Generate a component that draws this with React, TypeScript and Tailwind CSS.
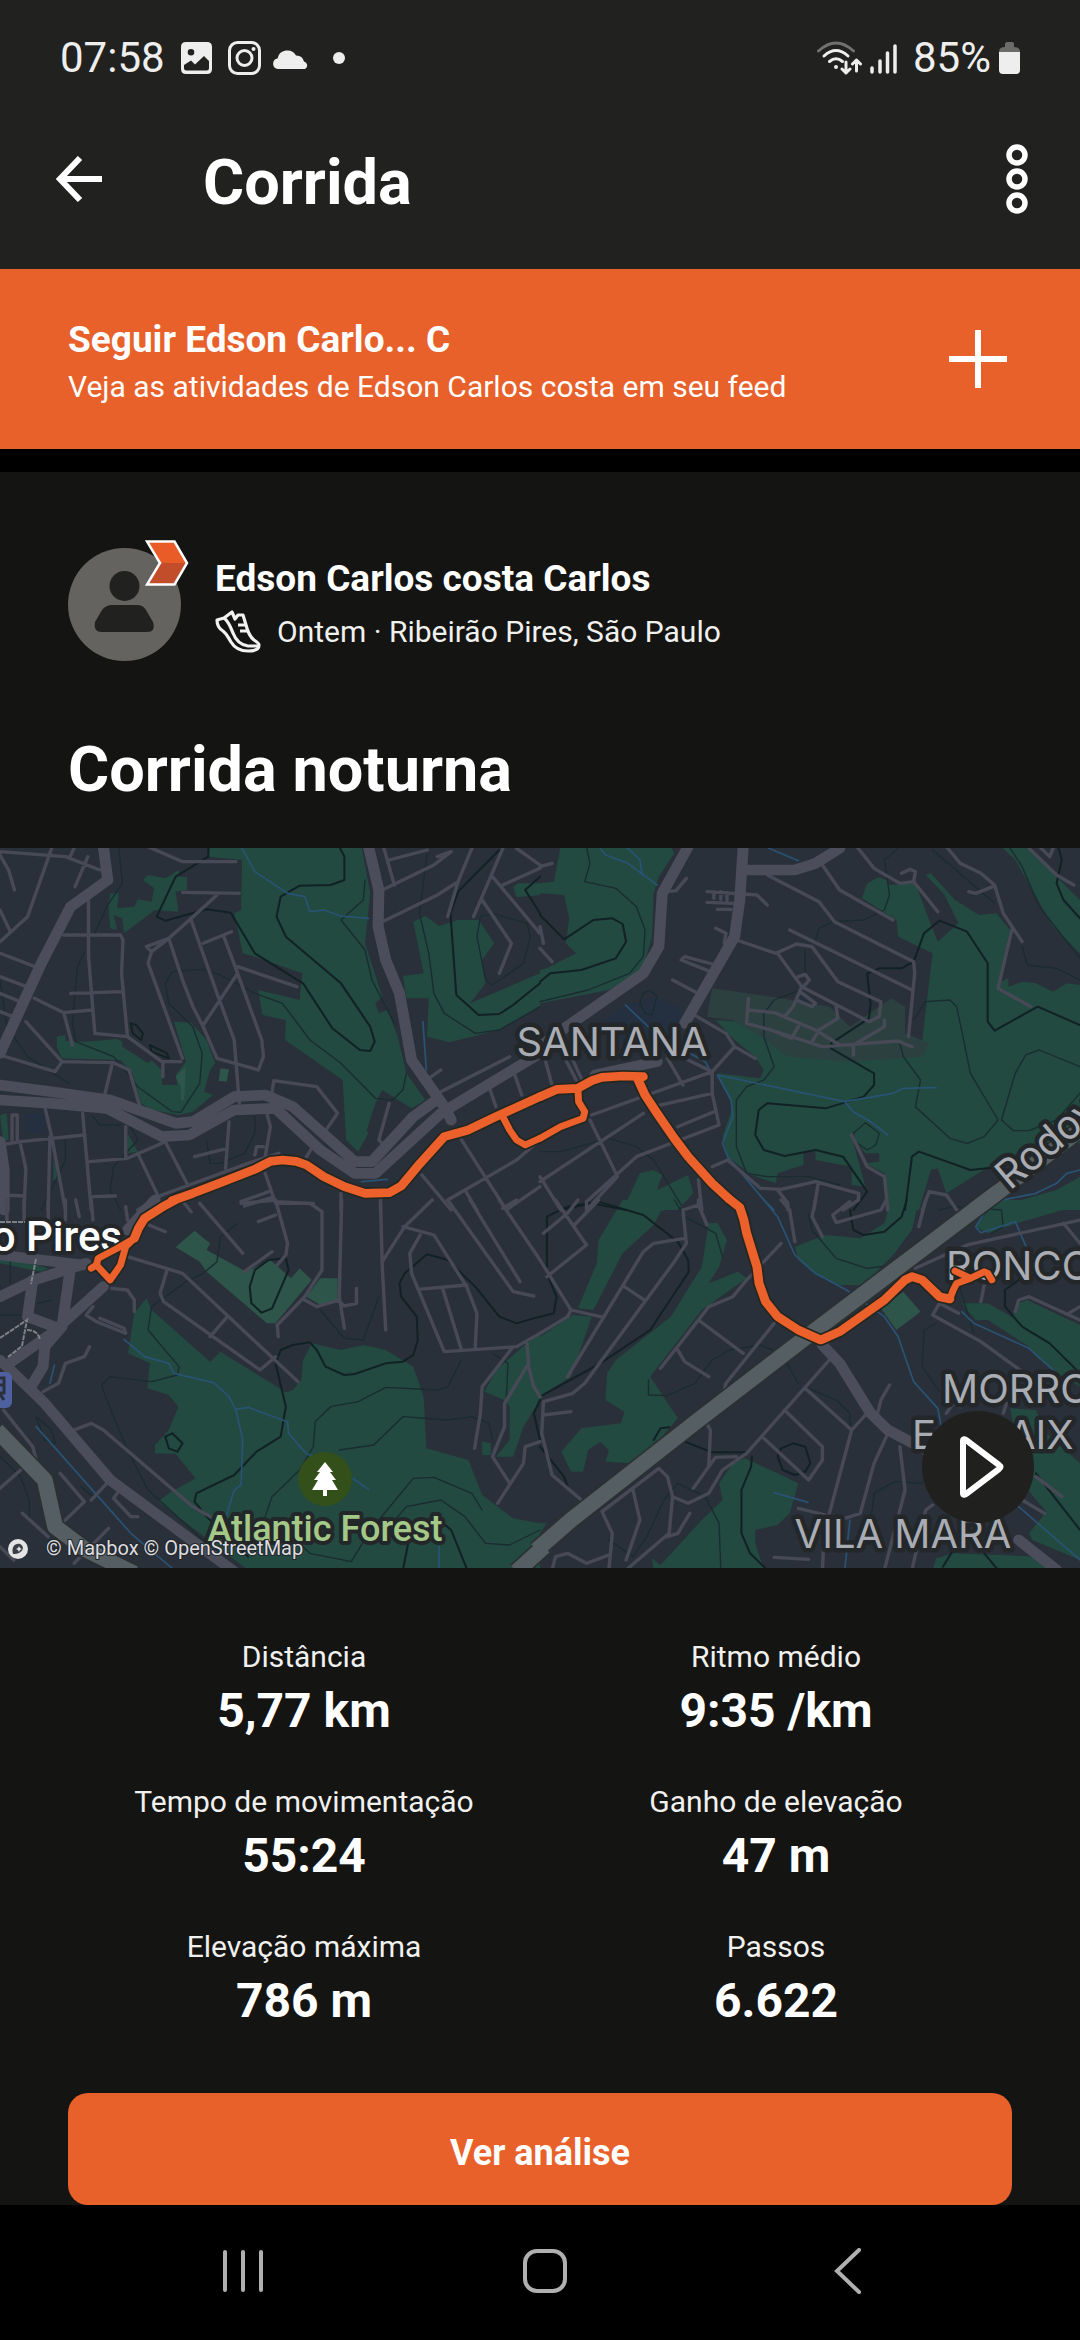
import type { ReactNode } from 'react';

type Stat = {
    label: string;
    value: string;
};

const STATS: Stat[] = [
    { label: 'Distância', value: '5,77 km' },
    { label: 'Ritmo médio', value: '9:35 /km' },
    { label: 'Tempo de movimentação', value: '55:24' },
    { label: 'Ganho de elevação', value: '47 m' },
    { label: 'Elevação máxima', value: '786 m' },
    { label: 'Passos', value: '6.622' },
];

type Tile = {
    transform: string;
    parks: string;
    lightParks: string;
    suburbs: string;
    lakes: string;
    contours: string;
    ridges: string;
    rivers: string;
    minor: string;
    major: string;
    highway: string;
    route: string;
    detour: string;
};

// four map tiles, every tile has its own 1568 x 1110 grid
const TILES: Tile[] = [
    {
        transform: 'translate(0 -8) scale(.34439 .33333)',
        parks: 'M610 20 1050 20 1075 160 1060 310 1110 470 1090 490 1100 520 1125 510 1155 590 1180 700 1235 780 1195 805 1110 750 1090 790 1065 870 1070 880 1040 935 1005 900 995 720 828 600 830 540 762 525 750 450 870 480 878 400 740 350 705 340 680 220 700 210 703 60 605 50Z M415 120 430 105 480 115 520 90 520 110 543 112 543 150 510 155 518 215 450 210 360 280 355 235 330 225 340 270 320 265 315 200 320 160 345 160 340 205 390 200 400 178 440 185 448 145Z M165 590 190 585 190 603 250 605 340 597 355 605 355 620 430 670 440 660 470 690 470 735 515 735 510 705 540 665 505 545 555 548 600 600 625 670 610 690 592 755 618 765 560 815 520 825 440 810 410 790 385 700 350 660 180 655 165 620Z M1200 245 1235 228 1275 258 1330 240 1390 240 1435 310 1400 360 1410 430 1365 490 1568 400 1568 500 1450 570 1305 607 1240 590 1245 475 1180 475 1170 408 1230 400Z M1490 140 1505 130 1568 130 1568 165 1500 172Z M0 825 20 820 25 900 10 905Z M370 880 400 935 370 940Z M155 950 168 1020 155 1020Z',
        lightParks: 'M640 685 665 688 658 725 635 722Z M510 710 540 680 535 780 525 780 525 740Z',
        suburbs: '',
        lakes: 'M70 820 130 820 130 880 80 880Z',
        contours: 'M345 20 355 130 310 200 275 280 M245 335 225 380 210 550 220 605 330 650 400 740 500 815 525 817 580 730 587 640 560 560 490 490 480 430 500 395 585 388 640 405 740 460 820 490 900 600 990 670 1090 775 1140 780 1170 750 1180 700 M1060 120 1055 180 990 240 1060 330 1080 420 1145 550 M1240 40 1218 220 1245 340 1260 460 1290 520 1380 580 1450 570 1568 500 M1395 230 1385 290 1410 420 1430 435 1520 370 1540 290 1530 250 1430 220Z M270 830 290 855 350 855 M740 830 740 880 710 940 640 970 610 970 600 900 M0 420 20 560 80 650 200 730 M380 860 400 900 330 980 320 1050 350 1110 M190 900 190 960 120 1110',
        ridges: 'M605 20 605 50 510 110 455 230 480 242 600 208 670 218 740 340 880 430 965 565 1045 630 1075 633 1088 605 1075 560 990 430 830 290 803 230 815 170 870 137 960 135 1000 120 1000 50 985 20 M1450 30 1330 155 1308 220 1325 465 1390 525 1450 522 1490 495 1568 430 M380 550 395 555 415 580 410 600 385 580Z M435 615 485 640 490 655 440 635Z M1568 110 1525 150 1568 220',
        rivers: 'M700 20 740 95 835 160 885 170 900 215 940 210 990 228 1070 235 M1228 545 1238 690 M1050 1025 1125 1018',
        minor: 'M0 35 190 50 290 90 M150 25 80 230 0 305 M0 45 25 90 42 150 M0 210 30 275 M255 50 218 140 M215 25 203 50 M430 20 530 65 685 65 M530 157 695 160 M630 165 550 240 490 295 440 335 425 320 490 295 530 420 560 500 590 560 630 655 750 690 765 650 760 600 690 400 650 290 M440 335 430 370 530 655 M555 240 630 460 680 600 695 790 M590 310 672 275 M690 380 862 440 M690 400 590 555 M185 285 350 285 357 300 353 400 370 590 M257 180 257 350 275 575 M205 460 355 455 M275 580 370 590 470 665 525 665 M473 665 473 710 M100 475 185 518 265 510 M185 518 210 615 M0 340 115 385 M0 410 90 445 M0 460 70 490 M0 515 50 535 M75 545 180 665 330 668 375 690 405 795 M180 665 160 695 0 645 M325 675 305 760 M790 755 795 722 920 740 980 820 950 865 M130 800 150 890 190 1110 M0 915 60 905 245 885 M240 820 265 1110 M260 965 370 955 480 905 M365 860 365 950 M60 915 75 985 70 1110 M145 890 140 1110 M400 940 460 1070 M480 905 545 1035 M665 845 655 985 M565 950 660 925 M775 820 785 860 770 950 M400 1110 470 1065 720 970 810 940 M740 945 745 920 765 920 M905 925 890 950 M1130 790 1100 900 1115 915 M1115 25 1145 135 M1130 60 1240 30 M1110 150 1260 75 1310 35 1270 50 M1110 245 1270 165 1330 125 1370 25 M1330 125 1300 230 M1460 25 1375 230 M1430 110 1568 280 M1460 135 1568 85 M1500 25 1568 75 M1400 180 1485 310 1450 400 M1280 755 1480 650 M1490 690 1515 765 M1420 740 1440 800 M1245 715 1280 690 M1340 900 1470 1110 M1225 1005 1310 1110 M1300 1080 1500 960 1568 900 M0 1065 70 1068 M700 1085 780 1055 M710 1098 790 1072 M770 1000 800 1090 910 1090 M270 1070 335 1068 M990 1060 990 1110 M1105 1080 1105 1110 M1350 1050 1385 1110 M1470 1110 1568 1040 M35 900 35 825 50 825 50 900',
        major: 'M300 20 313 120 205 200 120 370 0 640 M1070 20 1100 150 1098 260 1120 360 1160 460 1195 660 1290 800 1310 840 M0 735 150 755 320 780 510 850 560 845 680 770 770 765 850 800 1030 965 1080 965 1200 830 1260 785 M0 780 150 790 310 805 470 890 550 885 680 810 800 805 930 930 1030 1000 1090 1000 1280 820 1568 640 M0 905 12 990 12 1110',
        highway: '',
        route: 'M500 1082 560 1060 640 1028 740 988 785 964 820 960 860 964 890 975 940 1010 1000 1040 1060 1060 1130 1058 1165 1038 1220 970 1290 890 1360 870 1440 830 1568 770',
        detour: 'M1460 830 1480 870 1500 900 1525 915 1568 895',
    },
    {
        transform: 'translate(540 -8) scale(.34439 .33333)',
        parks: 'M60 20 380 20 390 40 345 110 330 160 325 290 295 400 200 450 0 490 0 390 20 385 105 340 75 310 85 235 70 165 0 160 0 130 40 125Z M935 175 950 130 985 112 1005 120 1015 135 1090 130 1130 240 1155 305 1215 250 1175 165 1120 105 1135 100 1205 180 1275 225 1325 220 1365 270 1330 430 1360 415 1360 440 1400 425 1440 430 1490 455 1530 430 1568 435 1568 910 1350 950 1180 1060 1155 985 1135 990 1100 1110 1015 1110 1000 1000 945 970 985 965 985 940 945 940 905 890 945 1040 905 1035 905 980 800 960 800 935 765 935 765 975 690 1000 685 1030 615 1005 545 950 530 890 560 800 515 700 640 715 650 690 625 650 565 600 510 540 640 550 900 600 1070 590 1110 600 1140 340 1040 290 1035 240Z M1340 20 1420 25 1500 110 1568 180 1568 340 1490 260 1380 60Z M240 1110 290 1000 330 990 355 1005 340 1050 430 1005 445 1060 400 1110Z M1320 1110 1380 1085 1500 1050 1568 1010 1568 1110Z',
        lightParks: '',
        suburbs: 'M500 445 700 475 840 500 900 560 1020 475 1060 500 1060 580 1130 610 1110 650 900 665 720 650 640 590 560 540 485 530Z',
        lakes: 'M190 540 245 495 340 470 430 520 400 600 340 650 230 610Z M740 440 810 520 800 535 760 500Z',
        contours: 'M135 20 145 70 130 125 220 145 280 200 305 270 300 350 260 400 140 450 0 485 M1140 30 1320 190 M1365 25 1400 80 1450 200 1568 355 M1400 320 1415 375 1500 385 1568 420 M1085 540 1120 485 1190 480 1210 500 1250 700 1330 840 1290 890 1240 910 1190 895 1090 800 1105 720 1055 650 1045 610 M1568 680 1450 630 1410 645 1380 700 1340 840 1375 872 1420 872 1500 840 1568 760 M745 455 680 480 650 520 650 590 680 680 650 720 600 740 570 780 570 920 600 1000 660 1010 780 1010 870 1035 M770 330 770 400 M800 300 810 265 850 245 940 240 1000 210 1015 165 1000 60 1040 25 M910 880 945 848 985 880 975 915 950 930 915 905Z M300 460 320 450 340 470 325 525 305 520 290 490Z M0 935 60 935 200 895 280 920 330 960 410 1095',
        ridges: 'M0 225 70 298 155 240 210 235 240 252 250 305 220 355 120 390 30 400 0 425 M845 610 955 535 960 495 950 400 985 385 1050 385 1085 365 1115 280 1160 242 1240 275 1300 370 1300 545 1320 572 1445 500 1568 555 M845 625 970 700 970 735 940 770 830 805 660 790 635 810 625 885 650 930 710 948 800 930 880 950 950 1055 910 1110 M1060 1110 1080 950 1100 935 1250 990 1340 980 1400 940 M1505 20 1515 60 1500 130 1520 180 1568 235 M60 1110 150 1090 250 1110',
        rivers: 'M250 20 290 60 297 105 M175 25 190 45 255 70 340 135 M515 705 885 785 1025 760 1055 745 1150 743 M885 785 910 815 960 845 1010 885 M665 25 750 62 M248 495 340 585 480 665 495 695 M515 705 555 780 560 830 530 910 545 950 650 1080 680 1110 M1320 1085 1440 1060 1500 1030 1530 1000 1568 990',
        minor: 'M570 300 685 340 745 312 790 320 865 425 990 485 985 530 955 545 760 440 690 340 M725 270 1080 450 M660 105 810 185 855 245 1085 365 1088 400 1070 590 M820 75 870 150 1025 240 M920 20 970 85 1045 130 1085 125 1155 215 M1050 100 1075 88 1090 95 1085 125 M1180 20 1220 70 1280 100 1320 135 1345 220 1400 305 M1245 155 1265 160 1315 140 M1370 270 1330 445 1425 500 M1420 25 1500 105 1550 135 M1450 20 1480 50 1490 25 M440 520 540 580 565 620 500 695 M565 620 625 655 M385 420 450 455 M370 155 395 152 425 115 M485 155 630 165 660 195 M485 187 560 190 M515 208 555 208 M505 155 505 175 M525 155 525 178 M543 158 543 180 M510 265 540 280 535 310 M495 395 410 360 420 350 500 372 M605 475 600 550 670 570 730 595 750 560 M605 510 680 518 M685 520 800 570 870 615 M670 570 820 620 1040 603 1080 620 M1000 540 1000 560 910 615 910 645 M860 500 865 535 810 570 790 605 M760 440 735 500 710 530 M750 410 770 403 782 420 765 440 M755 455 800 490 790 500 745 480 M10 640 35 735 M75 660 105 720 M95 660 120 715 M370 655 415 735 M150 825 500 695 430 660 M500 695 500 760 520 855 280 950 135 1085 135 1110 M0 1025 300 820 M330 800 500 760 M400 860 505 815 M145 840 225 1010 135 1110 M0 1010 60 1110 M500 980 545 960 640 1045 700 1048 800 1025 925 1060 925 1080 880 1110 M690 1050 720 1090 720 1110 M808 1030 795 1110 M460 1020 470 1110 M905 885 950 980 1000 1010 1010 1110 M1110 1110 1130 1055 1180 1065 1210 1110 M0 325 35 365 M0 80 35 70 M0 260 10 310',
        major: 'M430 20 355 160 345 320 300 400 50 580 0 620 M590 20 580 180 565 290 420 550 M590 90 740 90 800 70 870 25 M340 665 160 705 M0 640 60 590',
        highway: 'M1260 1110 1345 1045 1568 870',
        route: 'M0 770 50 748 110 745 150 722 180 712 240 708 300 710 M285 720 305 765 340 820 390 895 430 950 500 1030 548 1076',
        detour: 'M110 745 112 785 130 815 125 835 60 860 0 895',
    },
    {
        transform: 'translate(0 352) scale(.34439 .33333)',
        parks: 'M425 295 440 330 610 485 640 455 830 577 850 570 875 540 880 480 905 430 990 450 1055 435 1120 450 1200 500 1230 590 1238 745 1360 780 1400 885 1490 955 1568 970 1568 1110 720 1110 460 905 490 880 568 835 510 762 450 760 450 735 490 690 518 620 490 585 428 565 435 490 372 460 390 340Z M1407 575 1440 510 1530 430 1568 400 1568 600 1520 680 1490 770 1440 770 1480 720 1480 620 1465 600Z M1400 725 1425 730 1425 765 1400 765Z M0 165 140 205 120 215 0 190Z',
        lightParks: 'M565 92 610 130 600 150 715 215 785 180 845 235 870 205 905 240 800 370 775 370 600 215 580 185 510 142Z M930 235 980 235 980 300 930 315 890 290Z',
        suburbs: '',
        lakes: '',
        contours: 'M690 70 640 110 630 185 590 220 540 245 440 320 430 390 520 500 515 525 440 545 320 530 295 555 310 600 370 750 430 870 600 1030 M1340 480 1300 560 1270 570 1120 562 1040 605 960 620 915 665 910 740 870 810 790 890 770 950 M985 750 1085 735 1170 650 1300 660 1370 650 1420 670 1430 720 M1050 1000 1100 960 1200 835 1260 832 1370 880 1400 930 M1130 980 1180 920 1280 900 1350 950 1410 1030 1480 1035 1568 990 M800 960 900 1060 1020 1085 1070 1000 M930 330 1000 415 1055 420 1100 290 M0 770 60 830 85 900 85 960 M105 650 150 690 160 730 130 720Z M235 860 270 890 310 850 M1430 460 1475 490 1470 600 M0 345 60 345 M30 180 30 250 M110 310 150 300',
        ridges: 'M800 490 815 450 850 435 900 427 920 450 945 500 1000 525 1030 522 1120 490 1170 485 1200 465 1213 420 1210 350 1165 290 1160 250 1175 220 1240 163 1300 180 1380 260 1450 350 1500 370 1568 350 M800 490 830 620 815 710 745 755 680 825 570 880 565 905 600 950 720 1070 M1170 1110 1185 1030 M780 180 830 175 838 210 790 325 760 338 730 310 725 260 740 210Z M480 710 500 700 530 730 515 755 490 745Z M1265 950 1310 990 1355 1105 M1568 600 1550 640 1568 720',
        rivers: 'M360 418 420 470 490 490 505 520 620 548 665 590 685 630 705 720 700 855 680 870 658 945 M685 628 720 622 835 665 838 700 890 762 920 770 M1025 835 1070 868 M158 495 145 550 M105 680 380 1000 500 1105 M1275 1040 1275 1110',
        minor: 'M370 170 530 220 865 545 M485 210 465 280 475 305 755 510 800 470 M660 350 610 410 M580 10 705 160 M535 10 555 35 M800 0 835 130 830 165 805 195 M800 5 900 10 935 35 935 210 885 290 805 375 808 410 M885 300 920 320 985 300 M992 0 985 290 1000 385 M1105 10 1110 200 1120 390 M1035 265 1035 310 1000 318 980 300 M1255 0 1175 80 1110 185 M1170 80 1260 105 1355 260 1385 340 1380 440 M1220 105 1190 160 1195 220 1290 455 1500 440 1568 400 M1215 268 1355 255 M1285 265 1340 450 M1300 0 1490 275 1550 288 M1365 0 1510 245 M1450 0 1568 180 M1460 25 1500 0 M1490 440 1400 560 1395 640 1378 745 M1530 430 1535 490 1465 610 1465 680 1430 770 1480 850 M1535 500 1550 560 1568 590 M1568 725 1525 740 1520 790 1445 910 M325 265 370 270 390 300 390 335 M270 320 250 345 280 365 365 400 360 385 290 355 M260 440 245 470 190 490 170 550 125 575 M215 690 265 670 300 690 560 920 610 950 M10 630 95 740 120 840 M60 810 0 865 M65 940 140 1010 M175 820 245 905 180 970 M310 850 265 900 M340 880 330 895 380 950 400 950 M315 985 215 1090 M700 10 800 0 M750 65 800 45 M710 215 790 155 M365 20 370 60 M420 70 480 95 M220 0 230 50 M20 0 20 60 M70 0 70 60 M140 0 140 60 M190 0 190 60 M265 0 270 60 M0 1040 40 1080',
        major: 'M0 290 100 240 250 190 M0 165 240 195 M300 260 150 400 20 495 M0 480 130 610 320 840 700 1130 M205 200 180 380 130 440 125 500 90 560 M95 240 80 350 170 385 M370 90 450 0',
        highway: 'M-10 690 60 765 130 840 160 980 250 1050 390 1120 M1580 1040 1500 1115',
        route: 'M510 -1 470 22 420 55 402 85 390 115',
        detour: 'M390 115 340 145 285 175 280 195 265 205 M280 195 320 240 350 195 365 140 390 115',
    },
    {
        transform: 'translate(540 352) scale(.34439 .33333)',
        parks: 'M240 0 345 0 385 20 350 35 330 75 240 160 155 330 110 325 165 190 170 120Z M0 410 95 345 150 350 90 530 20 575 0 600Z M490 70 515 68 543 120 520 200 490 250 575 215 600 235 470 330 320 530 400 655 330 740 260 790 190 785 200 750 175 725 140 750 125 815 90 815 62 755 120 685 235 670 245 635 190 600 195 520 220 480 380 350 470 200Z M740 140 830 105 930 115 1000 70 1020 0 1100 0 1080 90 1050 130 1030 160 940 255 870 255 800 225 750 180Z M1280 60 1330 0 1568 0 1568 15 1385 70 1300 100 1265 80Z M1225 310 1300 310 1370 350 1390 310 1415 300 1568 375 1568 560 1500 520 1440 470 1420 440 1300 360 1265 360Z M1365 625 1440 630 1470 700 1568 790 1568 1080 1430 1020 1420 1000 1470 935 1400 850 1380 700Z M595 775 690 820 750 850 725 940 690 975 625 990 625 1030 650 1110 330 1110 325 1075 350 1095 470 960 530 900 520 850 560 790Z M1150 1075 1200 1060 1450 1070 1480 1110 1140 1110Z M0 970 20 970 0 1000Z',
        lightParks: 'M990 325 1055 275 1105 335 1035 390Z',
        suburbs: '',
        lakes: '',
        contours: 'M780 40 790 90 860 175 950 205 1030 195 M390 0 420 50 510 100 530 170 M315 540 315 585 370 587 450 550 500 480 550 450 640 435 700 460 750 550 M780 565 860 600 900 640 900 690 M1150 370 1115 390 1110 500 1160 575 M200 1020 270 1070 310 1010 360 900 400 850 480 890 520 970 525 1110 M920 1020 965 930 970 880 1030 845 1110 850 M1215 250 1260 400 M1160 30 1200 20 1340 30 1345 80 1310 100',
        ridges: 'M20 200 20 50 80 20 170 5 300 45 400 125 430 180 432 215 320 390 175 490 0 590 M0 350 40 340 48 290 20 220 M900 30 910 90 940 105 1000 95 1050 50 1065 0 M1390 240 1350 270 1350 320 1400 380 1480 430 1568 520 M615 770 613 800 585 870 585 1000 610 1060 660 1110 M0 740 70 830 80 860 M330 720 350 685 375 682 M420 725 500 757 600 757 M690 770 700 745 735 730 770 740 785 790 770 815 740 825 705 810Z M1440 820 1568 990 M1170 1100 1200 1050 M1290 1060 1330 1110',
        rivers: 'M650 0 690 50 740 165 800 220 890 270 1000 350 1040 410 1085 545 1155 625 1165 680 M1290 40 1265 80 1280 98 1380 65 1420 160 M1225 335 1260 370 1420 445 1495 515 M680 878 778 907 M900 960 885 1110 M1390 920 1568 1080',
        minor: 'M0 180 90 330 185 352 M10 100 80 40 110 0 M45 0 135 135 20 230 M90 330 80 350 0 400 M170 0 100 75 M420 115 330 130 300 155 80 530 M415 30 425 130 390 185 130 550 95 580 10 605 5 700 35 825 120 900 M415 30 460 15 485 75 M460 0 460 15 M245 260 300 298 M700 130 600 240 560 290 490 320 460 360 350 505 M460 360 590 460 M400 450 420 485 490 530 M680 370 540 550 530 590 M840 480 600 760 530 810 490 880 430 910 385 890 370 830 345 805 180 935 210 1000 200 1110 M385 890 375 1000 250 1110 M270 870 290 960 250 1080 M435 940 400 1000 370 1010 M770 565 905 690 M710 630 820 740 820 780 780 840 645 710 M945 645 905 690 825 1000 820 1110 M1010 700 970 790 930 940 870 960 M1045 740 1060 870 1000 1110 M750 925 830 945 M1080 1110 1120 930 1140 915 M980 640 990 600 1015 555 M700 0 725 30 740 125 M800 0 790 50 820 110 M1005 0 990 30 860 68 850 45 900 5 M1120 0 1100 80 M1090 205 1240 135 1568 60 M1520 70 1568 130 M1215 340 1160 310 1140 345 1280 425 1400 515 M1290 255 1280 305 M1380 335 1390 300 1420 290 1568 360 M1440 830 1515 890 M1400 900 1465 940 M680 1072 780 1078 M10 645 90 635 M35 1110 45 1070 80 1060 135 1090 200 1065 M1180 640 1200 610 1220 620 M480 665 495 690 490 800 445 865 M570 770 510 772 490 800 M1535 340 1568 320 M1345 640 1355 610',
        major: 'M820 435 870 490 960 640 1010 690 1120 750 M1390 1020 1500 1110',
        highway: 'M1330 -24 800 390 460 660 90 960 -10 1050',
        route: 'M548 -4 580 22 592 60 600 100 630 200 636 250 655 305 690 350 750 390 815 420 870 395 1000 300 1060 240 1080 230 1110 240 1160 290 1190 297',
        detour: 'M1190 297 1200 270 1210 250 1250 235 1290 215 1300 220 1312 240 M1205 213 1250 235',
    },
];

function TileLayer({ render }: { render: (tile: Tile) => ReactNode }) {
    return (
        <>
            {TILES.map((tile) => (
                <g key={tile.transform} transform={tile.transform}>
                    {render(tile)}
                </g>
            ))}
        </>
    );
}

function RouteMap() {
    return (
        <svg viewBox="0 0 1080 720" className="block w-full bg-[#2a3039]" role="img" aria-label="Mapa">
            <g>
                <TileLayer
                    render={(t) => (
                        <>
                            <path d={t.lakes} fill="#243040" />
                            <path d={t.parks} fill="#224a40" />
                            <path d={t.suburbs} fill="#2c413f" />
                            <path d={t.lightParks} fill="#2d5549" />
                        </>
                    )}
                />
            </g>
            <g fill="none" strokeLinejoin="round" strokeLinecap="round">
                <TileLayer
                    render={(t) => (
                        <>
                            <path d={t.contours} stroke="#1a2c30" strokeWidth="4" />
                            <path d={t.ridges} stroke="#122126" strokeWidth="6" />
                            <path d={t.rivers} stroke="#295374" strokeWidth="5" />
                        </>
                    )}
                />
                <TileLayer
                    render={(t) => (
                        <>
                            <path d={t.minor} stroke="#484956" strokeWidth="10" />
                            <path d={t.major} stroke="#4c4d5a" strokeWidth="32" />
                        </>
                    )}
                />
            </g>
            <g fill="none" strokeLinejoin="round">
                <TileLayer render={(t) => <path d={t.highway} stroke="#2b3130" strokeWidth="56" />} />
                <TileLayer render={(t) => <path d={t.highway} stroke="#555e62" strokeWidth="46" />} />
            </g>

            {/* footpaths round the station */}
            <g fill="none" stroke="#7c8087" strokeWidth="2" strokeDasharray="5 1">
                <path d="M0 490 27 472 22 498 8 509M27 482Q38 482 40 492M36 411 31 436M0 374H26" />
            </g>

            <g
                fontFamily='Inter, "Liberation Sans", sans-serif'
                fontSize="40"
                fill="#a9acb2"
                stroke="#23272a"
                strokeWidth="9"
                strokeLinejoin="round"
                paintOrder="stroke"
            >
                <text x="612" y="208" textAnchor="middle">SANTANA</text>
                <text transform="translate(1010 343) rotate(-40)">Rodovi</text>
                <text x="946" y="432">RONCO</text>
                <text x="942" y="555">MORRO</text>
                <text x="912" y="601">E</text>
                <text x="1008" y="601">AIX</text>
                <text x="903" y="700" textAnchor="middle">VILA MARA</text>
            </g>
            <g
                fontFamily='Roboto, "Liberation Sans", sans-serif'
                fontWeight="500"
                stroke="#23272a"
                strokeWidth="8"
                strokeLinejoin="round"
                paintOrder="stroke"
            >
                <text x="122" y="403" fontSize="42" fill="#ffffff" textAnchor="end">o Pires</text>
                <text x="325" y="693" fontSize="36" fill="#a4c887" textAnchor="middle">Atlantic Forest</text>
            </g>

            <g>
                <circle cx="325" cy="631" r="27" fill="#33501a" />
                <path d="M325 614 333 624H330L336 632H332L338 642H327V648H323V642H312L318 632H314L320 624H317Z" fill="#ffffff" />
            </g>
            <g>
                <rect x="-24" y="524" width="36" height="36" rx="6" fill="#4f60a0" />
                <path d="M-4 530H4V545H-4M-4 537H3M0 546 4 552" fill="none" stroke="#2a3039" strokeWidth="3" />
            </g>

            <g fill="none" strokeLinejoin="round" strokeLinecap="round">
                <TileLayer
                    render={(t) => (
                        <g stroke="#23271f">
                            <path d={t.route} strokeWidth="36" />
                            <path d={t.detour} strokeWidth="30" />
                        </g>
                    )}
                />
                <TileLayer
                    render={(t) => (
                        <g stroke="#ec602c">
                            <path d={t.route} strokeWidth="26" />
                            <path d={t.detour} strokeWidth="20" />
                        </g>
                    )}
                />
            </g>

            <g>
                <circle cx="18" cy="701" r="10" fill="#e4e4e4" />
                <path d="M13 706C11 699 15 695 20 696 25 698 24 706 13 706Z" fill="#3a3f45" />
                <path d="m19 698 1 2 2 1-2 1-1 2-1-2-2-1 2-1Z" fill="#e4e4e4" />
                <text x="46" y="707" fontFamily='Roboto, "Liberation Sans", sans-serif' fontSize="20" fill="#dcdde0" stroke="#23272a" strokeWidth="2" paintOrder="stroke">
                    © Mapbox © OpenStreetMap
                </text>
            </g>
        </svg>
    );
}

function StatusBar() {
    return (
        <div className="flex h-28 items-center justify-between px-[60px] pt-1 text-[42px] leading-none text-[#eeeeee]">
            <div className="flex items-center">
                <span>07:58</span>
                <svg width="31" height="32" viewBox="0 0 31 32" className="ml-4">
                    <path
                        fillRule="evenodd"
                        fill="currentColor"
                        d="M5 0H26Q31 0 31 5V27Q31 32 26 32H5Q0 32 0 27V5Q0 0 5 0ZM10 7A3.3 3.3 0 1 0 10 13.6 3.3 3.3 0 1 0 10 7ZM3 23V26Q3 28.500 5.500 28.500H25.500Q28 28.500 28 26V19L23 14 14 22.500 10 18.500Z"
                    />
                </svg>
                <svg width="33" height="34" viewBox="0 0 33 34" className="ml-4" fill="none" stroke="currentColor">
                    <rect x="1.5" y="1.5" width="30" height="31" rx="8" strokeWidth="3" />
                    <circle cx="16.500" cy="17" r="7.500" strokeWidth="3" />
                    <circle cx="25.500" cy="8" r="2" fill="currentColor" stroke="none" />
                </svg>
                <svg width="36" height="21" viewBox="0 0 36 21" className="ml-3" fill="currentColor">
                    <path d="M5 21A5.300 5.300 0 0 1 4.500 10.500 10 10 0 0 1 23 7.500 8 8 0 0 1 31 13.500 4 4 0 0 1 32 21Z" />
                </svg>
                <span className="ml-6 size-3 rounded-full bg-[#eeeeee]" />
            </div>
            <div className="flex items-center">
                <svg width="45" height="34" viewBox="0 0 45 34" fill="none" stroke="currentColor" strokeWidth="3" strokeLinecap="round" strokeLinejoin="round">
                    <path d="M1.500 10Q19 -6 36.500 10" stroke="#71716f" />
                    <path d="M7 15Q19 4 31 15M12.500 20.500Q19 15 25.500 20.500" />
                    <circle cx="19" cy="26" r="2" fill="currentColor" stroke="none" />
                    <path d="M29 21V32M25 28 29 32 33 28M39.500 30V19M35.500 23 39.500 19 43.500 23" />
                </svg>
                <svg width="27" height="31" viewBox="0 0 27 31" className="ml-2" stroke="currentColor" strokeWidth="3.500" strokeLinecap="round">
                    <path d="M2 25V29M10 18V29M17.500 10V29M25 3V29" />
                </svg>
                <span className="ml-4">85%</span>
                <svg width="21" height="32" viewBox="0 0 21 32" className="ml-2">
                    <path d="M6 5V2Q6 0 8 0H13Q15 0 15 2V5Q21 5 21 10H0Q0 5 6 5Z" fill="#6b6b69" />
                    <path d="M0 10H21V28Q21 32 17 32H4Q0 32 0 28Z" fill="currentColor" />
                </svg>
            </div>
        </div>
    );
}

function Header() {
    return (
        <header className="flex h-[157px] items-center justify-between pr-[52px] pb-6 pl-14">
            <div className="flex items-center gap-[100px]">
                <button type="button" aria-label="Voltar">
                    <svg width="47" height="46" viewBox="0 0 47 46" fill="none" stroke="#ffffff" strokeWidth="6" className="block">
                        <path d="M46 23H4M24 2 4 23 24 44" />
                    </svg>
                </button>
                <h1 className="pt-2 text-[63px] leading-[72px] font-bold">Corrida</h1>
            </div>
            <button type="button" aria-label="Mais opções">
                <svg width="22" height="70" viewBox="0 0 22 70" fill="none" stroke="#ffffff" strokeWidth="5.500" className="block">
                    <circle cx="11" cy="11" r="8" />
                    <circle cx="11" cy="35" r="8" />
                    <circle cx="11" cy="59" r="8" />
                </svg>
            </button>
        </header>
    );
}

function FollowBanner() {
    return (
        <section className="flex h-[180px] items-center justify-between bg-[#e8602a] pr-[73px] pl-[68px]">
            <div className="pt-2">
                <h2 className="text-[37px] leading-[47px] font-bold">Seguir Edson Carlo... C</h2>
                <p className="text-[30px] leading-[47px]">Veja as atividades de Edson Carlos costa em seu feed</p>
            </div>
            <button type="button" aria-label="Seguir">
                <svg width="58" height="58" viewBox="0 0 58 58" stroke="#ffffff" strokeWidth="6" className="block">
                    <path d="M29 0V58M0 29H58" />
                </svg>
            </button>
        </section>
    );
}

function Athlete() {
    return (
        <div className="flex items-center gap-[34px]">
            <div className="relative">
                <svg width="113" height="113" viewBox="0 0 113 113" className="block">
                    <circle cx="56.500" cy="56.500" r="56.500" fill="#65635f" />
                    <circle cx="56.500" cy="38" r="15" fill="#21211f" />
                    <path d="M44 57H69Q75 57 78 62L85 74Q88 84 79 84H34Q25 84 27 74L34 62Q38 57 44 57Z" fill="#21211f" />
                </svg>
                <svg width="44" height="46" viewBox="0 0 44 46" className="absolute -top-2 -right-2">
                    <path d="M2 1.500H29.500L42 23H15Z" fill="#e95b27" />
                    <path d="M15 23H42L29.500 44.500H2Z" fill="#c14d2a" />
                    <path d="M2 1.500H29.500L42 23 29.500 44.500H2L15 23Z" fill="none" stroke="#ffffff" strokeWidth="2.500" />
                </svg>
            </div>
            <div>
                <h2 className="text-[37px] leading-[53px] font-bold">Edson Carlos costa Carlos</h2>
                <div className="flex items-center gap-4">
                    <svg width="46" height="43" viewBox="0 0 46 43" fill="none" stroke="#f2f2f0" strokeWidth="3.200" strokeLinejoin="round">
                        <path d="M2 10 9 8 17 2 20 9 23 5 28 5 31 15C33 23 35 27 39 30 42 32 44 33 44 35 44 40 39 41 33 41 24 41 19 37 16 32 13 27 12 24 8 21 3 18 2 14 2 10Z" />
                        <path d="M9 8C14 12 15 16 18 23 21 31 26 35 33 36H44" />
                        <path d="M23 15H31M25 21H33" />
                    </svg>
                    <p className="text-[30px] leading-[53px] text-[#f0f0ee]">Ontem · Ribeirão Pires, São Paulo</p>
                </div>
            </div>
        </div>
    );
}

function StatItem({ item }: { item: Stat }) {
    return (
        <div className="text-center">
            <dt className="text-[30px] leading-[54px] text-[#f0f0ee]">{item.label}</dt>
            <dd className="text-[48px] leading-[54px] font-bold">{item.value}</dd>
        </div>
    );
}

function NavBar() {
    return (
        <nav className="grid h-[135px] grid-cols-3 items-center justify-items-center bg-black pr-[81px] pb-1 pl-[92px]">
            <button type="button" aria-label="Recentes">
                <svg width="42" height="44" viewBox="0 0 42 44" stroke="#b0b0b0" strokeWidth="4" strokeLinecap="round" className="block">
                    <path d="M3 3V41M21 3V41M39 3V41" />
                </svg>
            </button>
            <button type="button" aria-label="Início">
                <svg width="46" height="46" viewBox="0 0 46 46" fill="none" stroke="#b0b0b0" strokeWidth="4" className="block">
                    <rect x="3" y="3" width="40" height="40" rx="12" />
                </svg>
            </button>
            <button type="button" aria-label="Voltar uma tela">
                <svg width="28" height="46" viewBox="0 0 28 46" fill="none" stroke="#b0b0b0" strokeWidth="4" strokeLinecap="round" className="block">
                    <path d="M25 2 3 23 25 44" />
                </svg>
            </button>
        </nav>
    );
}

function App() {
    return (
        <div className="flex min-h-screen flex-col bg-[#141412] font-[Roboto,'Liberation_Sans',sans-serif] text-white">
            <div className="bg-[#21211f]">
                <StatusBar />
                <Header />
            </div>
            <FollowBanner />
            <main className="border-t-[23px] border-black">
                <div className="px-[68px] pt-[76px] pb-[42px]">
                    <Athlete />
                    <h2 className="mt-[73px] text-[63px] leading-[72px] font-bold">Corrida noturna</h2>
                </div>
                <div className="relative overflow-hidden">
                    <RouteMap />
                    <button
                        type="button"
                        aria-label="Reproduzir percurso"
                        className="absolute right-[46px] bottom-[45px] flex size-[112px] items-center justify-center rounded-full bg-[#20201e]"
                    >
                        <svg width="46" height="64" viewBox="0 0 46 64" fill="none" stroke="#ffffff" strokeWidth="6" strokeLinejoin="round" className="ml-2">
                            <path d="M4 6Q4 3 7 5L40 30Q43 32 40 34L7 59Q4 61 4 58Z" />
                        </svg>
                    </button>
                </div>
                <div className="px-[68px] pt-[62px]">
                    <dl className="grid grid-cols-2 gap-y-[37px]">
                        {STATS.map((item) => (
                            <StatItem key={item.label} item={item} />
                        ))}
                    </dl>
                    <button type="button" className="mt-[65px] block h-28 w-full rounded-[20px] bg-[#e8602a] pt-2 text-[36px] font-bold">
                        Ver análise
                    </button>
                </div>
            </main>
            <NavBar />
        </div>
    );
}

export default App;
